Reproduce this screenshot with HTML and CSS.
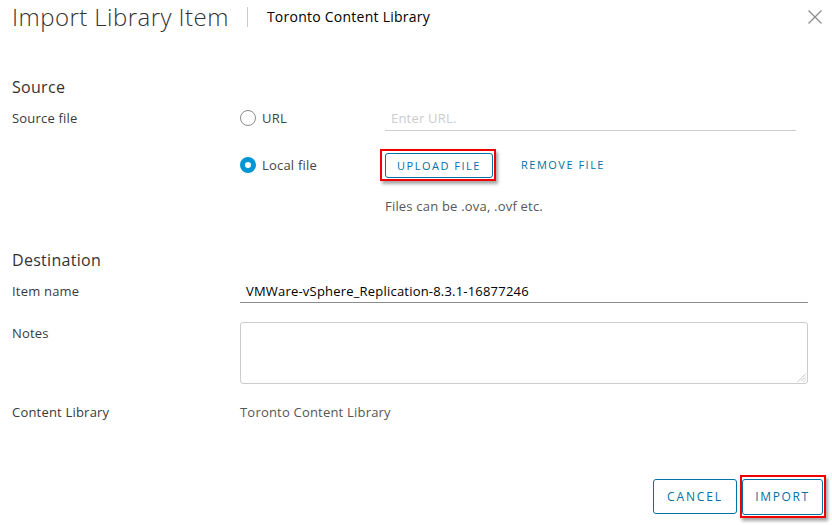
FILE: index.html
```html
<!DOCTYPE html>
<html>
<head>
<meta charset="utf-8">
<link rel="stylesheet" href="styles.css">
</head>
<body>
<div class="modal">
  <div class="header">
    <h1 class="title">Import Library Item</h1>
    <span class="divider"></span>
    <span class="subtitle">Toronto Content Library</span>
    <span class="close" aria-label="Close">
      <svg width="16" height="16" viewBox="0 0 16 16"><path d="M1.5 1.5 L14.5 14.5 M14.5 1.5 L1.5 14.5" stroke="#8c8c8c" stroke-width="1.3" fill="none"/></svg>
    </span>
  </div>

  <h2 class="section source-sec">Source</h2>
  <div class="row source-row">
    <div class="label">Source file</div>
    <div class="sources">
      <div class="opt">
        <label class="radio"><span class="dot"></span>URL</label>
        <div class="url-input">Enter URL.</div>
      </div>
      <div class="opt opt2">
        <label class="radio"><span class="dot checked"></span>Local file</label>
        <div class="file-btns">
          <span class="hl"><span class="btn small">UPLOAD FILE</span></span>
          <span class="link-btn">REMOVE FILE</span>
        </div>
      </div>
      <div class="hint">Files can be .ova, .ovf etc.</div>
    </div>
  </div>

  <h2 class="section dest-sec">Destination</h2>
  <div class="row name-row">
    <div class="label">Item name</div>
    <div class="name-input">VMWare-vSphere_Replication-8.3.1-16877246</div>
  </div>
  <div class="row notes-row">
    <div class="label notes-label">Notes</div>
    <div class="textarea">
      <svg class="grip" width="9" height="9" viewBox="0 0 9 9"><path d="M8.5 1 L1 8.5 M8.5 4 L4 8.5 M8.5 7 L7 8.5" stroke="#888" stroke-width="0.8" stroke-dasharray="1 0.6"/></svg>
    </div>
  </div>
  <div class="row lib-row">
    <div class="label">Content Library</div>
    <div class="value">Toronto Content Library</div>
  </div>

  <div class="footer">
    <span class="btn big cancel">CANCEL</span>
    <span class="hl hl2"><span class="btn big imp">IMPORT</span></span>
  </div>
</div>
</body>
</html>
```
FILE: styles.css
```css
* { box-sizing: border-box; }
html, body { margin: 0; padding: 0; background: #fff; }
body {
  font-family: "Open Sans", "Lato", sans-serif;
  color: #3a3a3a;
  width: 832px;
  height: 525px;
  overflow: hidden;
  font-size: 13px;
  line-height: 16px;
  letter-spacing: 0.2px;
}
.modal { padding: 0 12px; }
.header {
  display: flex;
  align-items: center;
  height: 33px;
}
.title {
  margin: 0;
  font-weight: 300;
  font-size: 24px;
  line-height: 30px;
  letter-spacing: 0.45px;
  color: #333;
}
.divider {
  width: 1px;
  height: 20px;
  background: #ccc;
  margin: 0 19px 0 18px;
}
.subtitle {
  font-size: 14px;
  color: #000;
  font-weight: 400;
  letter-spacing: 0.25px;
}
.close {
  margin-left: auto;
  display: flex;
  margin-right: -3px;
}
.section {
  margin: 0;
  font-weight: 400;
  font-size: 16px;
  line-height: 22px;
  letter-spacing: 0.3px;
  color: #333;
}
.source-sec { margin-top: 43px; }
.row { display: flex; align-items: flex-start; }
.label {
  width: 228px;
  flex: none;
  color: #3a3a3a;
}
.source-row { margin-top: 12px; }
.sources { flex: 1; }
.opt { display: flex; align-items: flex-start; }
.radio {
  width: 145px;
  height: 16px;
  flex: none;
  display: flex;
  align-items: center;
  color: #444;
}
.dot {
  width: 16px;
  height: 16px;
  border-radius: 50%;
  border: 1px solid #8c8c8c;
  margin-right: 6px;
  background: #fff;
}
.dot.checked {
  border: 5px solid #0095d3;
}
.url-input {
  width: 411px;
  color: #ccc;
  padding: 0 6px 4px;
  border-bottom: 1px solid #ccc;
}
.opt2 { margin-top: 18px; align-items: center; }
.file-btns { display: flex; align-items: center; }
.hl {
  display: inline-flex;
  border: 2px solid #f00000;
  padding: 2px 1px 1px 3px;
  box-shadow: 2px 3px 3px rgba(0,0,0,0.35);
  margin-left: -5px;
}
.btn {
  display: inline-flex;
  align-items: center;
  justify-content: center;
  border: 1px solid #0072a3;
  border-radius: 3px;
  color: #0072a3;
  font-size: 11px;
  letter-spacing: 1.5px;
  background: #fff;
  font-weight: 500;
}
.btn.small { width: 108px; height: 25px; }
.link-btn {
  margin-left: 25px;
  color: #0072a3;
  font-size: 11px;
  letter-spacing: 1.5px;
  font-weight: 500;
}
.hint {
  margin-top: 17px;
  margin-left: 145px;
  color: #565656;
}
.dest-sec { margin-top: 35px; }
.name-row { margin-top: 12px; }
.name-input {
  width: 568px;
  color: #000;
  padding: 0 6px 3px;
  border-bottom: 1px solid #8c8c8c;
}
.notes-row { margin-top: 19px; }
.notes-label { padding-top: 3px; }
.textarea {
  width: 568px;
  height: 62px;
  border: 1px solid #ccc;
  border-radius: 3px;
  position: relative;
}
.grip { position: absolute; right: 1px; bottom: 1px; }
.lib-row { margin-top: 20px; }
.value { color: #565656; }
.footer {
  display: flex;
  justify-content: flex-end;
  align-items: center;
  height: 43px;
  margin-top: 55px;
  margin-right: -6px;
}
.btn.big {
  font-size: 12px;
  letter-spacing: 1.9px;
}
.btn.cancel { width: 84px; height: 35px; margin-right: 3px; }
.hl2 { margin-left: 0; padding: 2px 1px 1px 0; }
.btn.imp { width: 81px; height: 36px; letter-spacing: 1.6px; }
```
